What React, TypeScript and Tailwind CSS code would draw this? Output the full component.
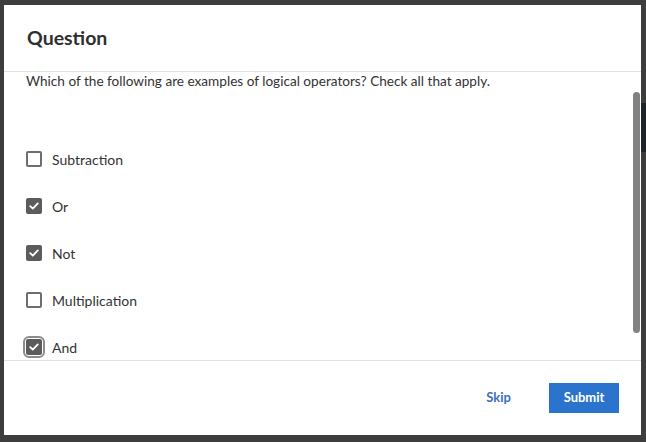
import React from 'react';

interface Option {
  label: string;
  checked: boolean;
  focused?: boolean;
}

const options: Option[] = [
  { label: 'Subtraction', checked: false },
  { label: 'Or', checked: true },
  { label: 'Not', checked: true },
  { label: 'Multiplication', checked: false },
  { label: 'And', checked: true, focused: true },
];

const Checkbox: React.FC<{ checked: boolean; focused?: boolean }> = ({ checked, focused }) => {
  const box = checked ? (
    <div className="w-4 h-4 rounded-[2px] bg-[#5c5c5c] flex items-center justify-center">
      <svg width="12" height="12" viewBox="0 0 12 12" fill="none">
        <path d="M2.2 6.2 L4.8 8.7 L9.8 3.4" stroke="#fff" strokeWidth="1.8" strokeLinecap="round" strokeLinejoin="round" />
      </svg>
    </div>
  ) : (
    <div className="w-4 h-4 rounded-[2px] border-2 border-[#6e6e6e] bg-white" />
  );
  if (!focused) return box;
  return <div className="rounded-[3px] outline-2 outline-solid outline-offset-1 outline-[#8c8c8c]">{box}</div>;
};

export default function App() {
  return (
    <div
      className="w-[646px] h-[442px] bg-[#3d3d3d] flex pl-[4px] pt-[5px] overflow-hidden"
      style={{ fontFamily: '"Lato", "Open Sans", sans-serif' }}
    >
      <div className="w-[637px] h-[430px] bg-white flex flex-col">
        {/* Header */}
        <div className="h-[67px] shrink-0 border-b border-[#e2e2e2] px-[23px] flex items-center">
          <h2 className="text-[19.5px] font-bold text-[#2f2f2f]">Question</h2>
        </div>

        {/* Body */}
        <div className="relative flex-1 overflow-hidden">
          <p className="px-[22px] pt-0 text-[13.6px] leading-[18px] text-[#333]">
            Which of the following are examples of logical operators? Check all that apply.
          </p>
          <div className="flex flex-col pl-[22px] pt-[61px] gap-[31px]">
            {options.map((o) => (
              <div key={o.label} className="flex items-center gap-[10px] h-4">
                <Checkbox checked={o.checked} focused={o.focused} />
                <span className="text-[14px] text-[#333]">{o.label}</span>
              </div>
            ))}
          </div>
          {/* scrollbar */}
          <div className="absolute right-[1px] top-[20px] w-[7px] h-[241px] rounded-full bg-[#828282]" />
        </div>

        {/* Footer */}
        <div className="h-[75px] shrink-0 border-t border-[#e2e2e2] flex items-center justify-end pr-[22px] gap-[30px]">
          <button className="text-[13px] font-bold text-[#3a70c4] px-2">Skip</button>
          <button className="w-[70px] h-[30px] bg-[#2b74cd] text-white text-[13px] font-bold">Submit</button>
        </div>
      </div>
      <div className="w-[5px] flex flex-col">
        <div className="h-[98px]" />
        <div className="h-[49px] bg-[#1f242a]" />
      </div>
    </div>
  );
}
